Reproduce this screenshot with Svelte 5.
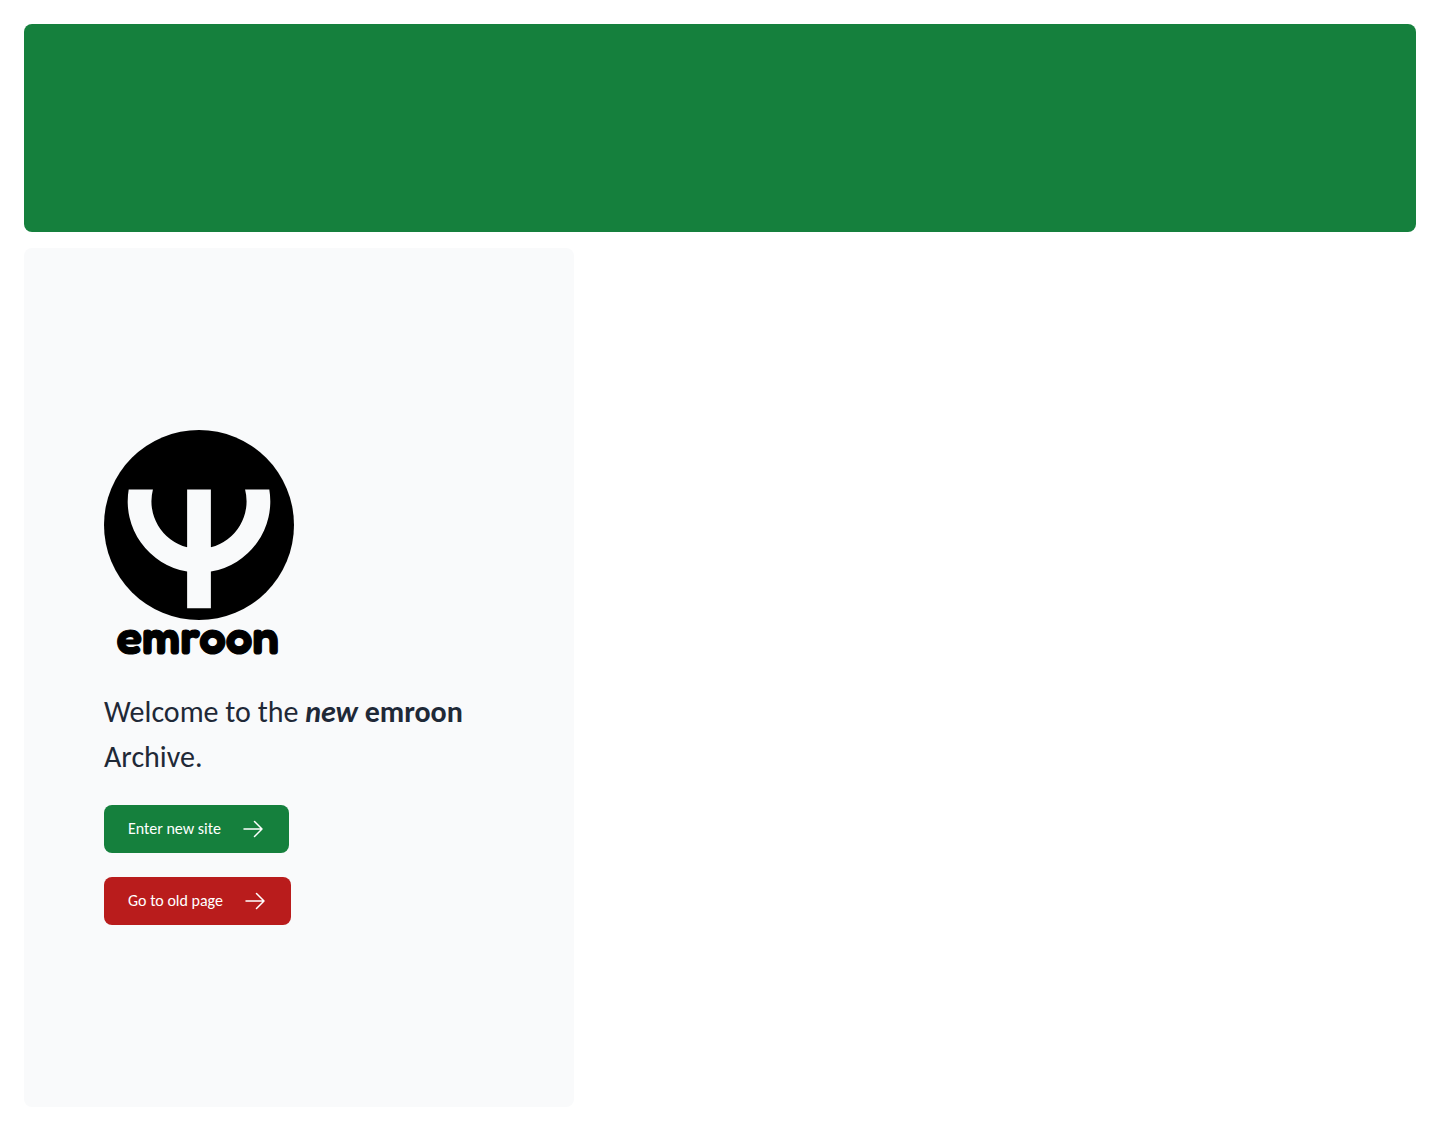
<script>
  const links = [
    { label: 'Enter new site', href: '#new', kind: 'new' },
    { label: 'Go to old page', href: '#old', kind: 'old' },
  ];
</script>

<div class="page">
  <header class="banner"></header>

  <main class="columns">
    <section class="welcome">
      <svg class="logo" viewBox="0 0 160 200" role="img" aria-label="emroon">
        <circle cx="80" cy="80" r="80" />
        <path
          class="psi"
          d="M20.8 50H41.2A40 40 0 0 0 70 98.7V50H90V98.7A40 40 0 0 0 118.8 50H139.2A60 60 0 0 1 90 119.2V150H70V119.2A60 60 0 0 1 20.8 50Z"
        />
        <text class="wordmark" x="79" y="189" text-anchor="middle">emroon</text>
      </svg>

      <h1>Welcome to the <strong><em>new</em> emroon</strong> Archive.</h1>

      <nav>
        {#each links as link}
          <a class="button {link.kind}" href={link.href}>
            {link.label}
            <svg class="arrow" viewBox="0 0 24 24" aria-hidden="true">
              <path d="M13.5 4.5L21 12m0 0l-7.5 7.5M21 12H3" />
            </svg>
          </a>
        {/each}
      </nav>
    </section>
  </main>
</div>

<style>
  :global(body) {
    margin: 0;
    background: #fff;
  }

  .page {
    display: flex;
    flex-direction: column;
    gap: 16px;
    min-height: 100vh;
    padding: 24px;
    box-sizing: border-box;
    font-family: Carlito, Calibri, Lato, sans-serif;
    font-size: 16px;
    line-height: 24px;
    color: #1f2937;
  }

  .banner {
    height: 208px;
    border-radius: 8px;
    background: #15803d;
  }

  .columns {
    flex: 1;
    display: grid;
    grid-template-columns: 2fr 3fr;
    gap: 16px;
  }

  .welcome {
    display: flex;
    flex-direction: column;
    align-items: flex-start;
    justify-content: center;
    padding: 0 80px;
    border-radius: 8px;
    background: #f9fafb;
  }

  .logo {
    display: block;
    width: 190px;
    aspect-ratio: 4 / 5;
  }

  .psi {
    fill: #f9fafb;
  }

  .wordmark {
    font-family: Fredoka, Nunito, sans-serif;
    font-size: 40px;
    font-weight: 600;
    stroke: #000;
    stroke-width: 1px;
    stroke-linejoin: round;
  }

  h1 {
    margin: 22px 0 26px;
    font-size: 30px;
    font-weight: 400;
    line-height: 45px;
  }

  nav {
    display: flex;
    flex-direction: column;
    align-items: flex-start;
    gap: 24px;
  }

  .button {
    display: inline-flex;
    align-items: center;
    gap: 20px;
    padding: 12px 24px;
    border-radius: 8px;
    color: #fff;
    text-decoration: none;
  }

  .new {
    background: #15803d;
  }

  .old {
    background: #b91c1c;
  }

  .arrow {
    width: 24px;
    height: 24px;
    fill: none;
    stroke: currentColor;
    stroke-width: 1.5;
    stroke-linecap: round;
    stroke-linejoin: round;
  }

  @media (max-width: 900px) {
    .columns {
      grid-template-columns: 1fr;
    }

    .welcome {
      padding: 48px 24px;
    }
  }
</style>
